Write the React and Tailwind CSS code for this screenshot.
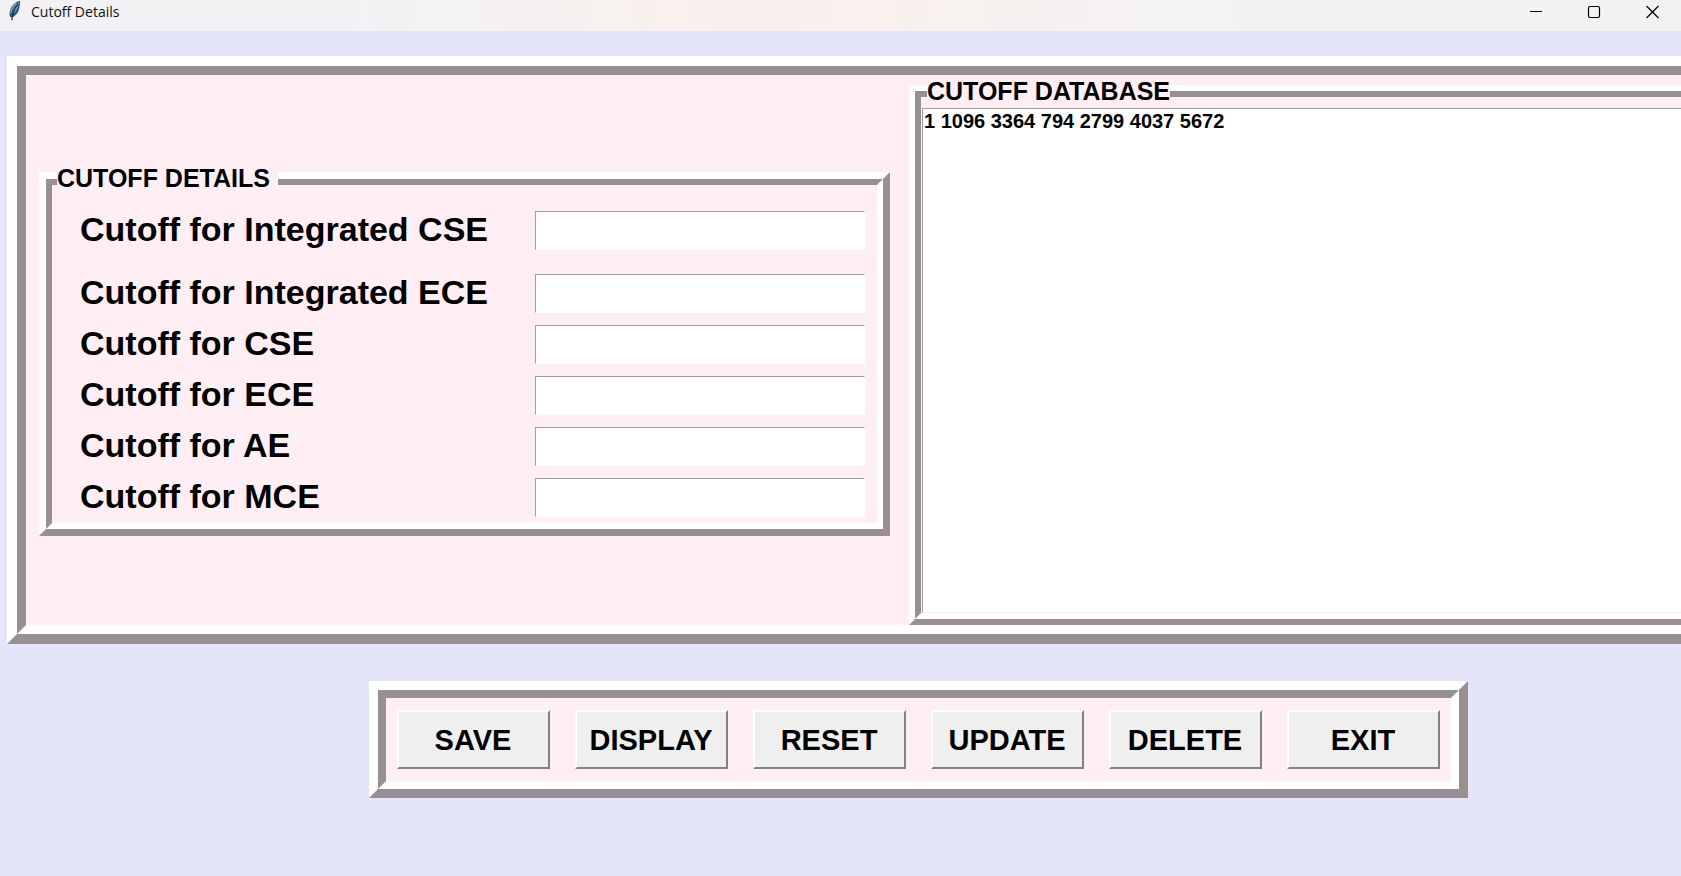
import React from "react";

const FIELDS = [
  { id: "int-cse", label: "Cutoff for Integrated CSE", row: "h-[75px]" },
  { id: "int-ece", label: "Cutoff for Integrated ECE", row: "h-[51px]" },
  { id: "cse", label: "Cutoff for CSE", row: "h-[51px]" },
  { id: "ece", label: "Cutoff for ECE", row: "h-[51px]" },
  { id: "ae", label: "Cutoff for AE", row: "h-[51px]" },
  { id: "mce", label: "Cutoff for MCE", row: "h-[51px]" },
];

const ACTIONS = ["SAVE", "DISPLAY", "RESET", "UPDATE", "DELETE", "EXIT"];

const RAISED = "border-t-white border-l-white border-r-[#988f92] border-b-[#988f92]";
const SUNKEN = "border-t-[#988f92] border-l-[#988f92] border-r-white border-b-white";

function Feather() {
  return (
    <svg width="14" height="21" viewBox="0 0 14 21" aria-hidden="true">
      <path d="M12 1C8.500 1.400 4.500 4.500 2.800 8.500C1.400 11.500 1 14.500 2.200 17L4 17.600C7 16 9.600 13.500 10.600 10.500C11.600 7.500 12.200 3.500 12 1Z" fill="#33506f" />
      <path d="M11 2C7.800 4.500 5.400 8.500 4.600 14.500C7.400 12.500 9.400 9.500 10.200 6.500Z" fill="#5c94d0" />
      <path d="M8.500 3.300C5.300 5.800 3.300 9.300 2.700 13.500" stroke="#8fb0cf" strokeWidth="1.200" fill="none" />
      <path d="M9.800 4C6.800 8 4.500 12.500 3.900 20.300" stroke="#1e2c3c" strokeWidth="1.100" fill="none" />
    </svg>
  );
}

function TitleBar() {
  return (
    <header className="flex h-[31px] items-start justify-between bg-linear-to-r from-[#f2f2f4] from-20% via-[#f9f0ec] via-45% to-[#f3f2f3] to-75%">
      <div className="flex items-start pl-2">
        <Feather />
        <h1 className="pl-[9px] font-['Open_Sans','Noto_Sans',sans-serif] text-[14px] leading-6 text-[#111]">
          Cutoff Details
        </h1>
      </div>
      <div className="flex h-6">
        <button type="button" aria-label="Minimize" className="flex w-[58px] items-center justify-center">
          <svg width="14" height="14" viewBox="0 0 14 14"><path d="M1 6.500H13" stroke="#000" /></svg>
        </button>
        <button type="button" aria-label="Maximize" className="flex w-[58px] items-center justify-center">
          <svg width="14" height="14" viewBox="0 0 14 14"><rect x="1.500" y="1.500" width="11" height="11" rx="1.500" fill="none" stroke="#000" strokeWidth="1.200" /></svg>
        </button>
        <button type="button" aria-label="Close" className="flex w-[58px] items-center justify-center">
          <svg width="14" height="14" viewBox="0 0 14 14"><path d="M1.500 1L13.500 13M13.500 1L1.500 13" stroke="#000" strokeWidth="1.200" /></svg>
        </button>
      </div>
    </header>
  );
}

export default function App() {
  return (
    <div className="min-h-screen overflow-hidden bg-[#e5e5fa] font-['Liberation_Sans',Arial,sans-serif] font-bold text-black">
      <div className="font-normal">
        <TitleBar />
      </div>

      {/* The form is laid out wider than the window and runs past its right edge. */}
      <main className="ml-[7px] w-[calc(100%+141px)] pt-[25px]">
        <div className={`border-[10px] ${RAISED}`}>
          <div className={`flex items-center border-[9px] bg-[#ffeff4] ${SUNKEN}`}>
            <section aria-labelledby="details-title" className="relative mt-2 mr-3 ml-[13px] shrink-0">
              <div className={`border-[7px] ${RAISED}`}>
                <form className={`border-[6px] pt-2 pr-3 pl-7 ${SUNKEN}`}>
                  {FIELDS.map((f) => (
                    <div key={f.id} className={`flex items-center ${f.row}`}>
                      <label htmlFor={f.id} className="w-[455px] pb-1 text-[34px] leading-10">
                        {f.label}
                      </label>
                      <input
                        id={f.id}
                        type="text"
                        className="h-[39px] w-[330px] border border-t-[#a39d9f] border-r-white border-b-white border-l-[#a39d9f] bg-white px-1 text-[28px] outline-none"
                      />
                    </div>
                  ))}
                </form>
              </div>
              <h2 id="details-title" className="absolute -top-2 left-[18px] bg-[#ffeff4] pr-2 text-[25px] leading-7">
                CUTOFF DETAILS
              </h2>
            </section>

            <section aria-labelledby="database-title" className="relative mt-[10px] ml-[7px] flex-1">
              <div className={`border-[6px] ${RAISED}`}>
                <div className={`border-[6px] pt-[11px] pl-px ${SUNKEN}`}>
                  <ul className="h-[505px] border border-t-[#a39d9f] border-r-[#f0f0f0] border-b-[#f0f0f0] border-l-[#a39d9f] bg-white pl-px text-[20px] leading-6">
                    <li>1 1096 3364 794 2799 4037 5672</li>
                  </ul>
                </div>
              </div>
              <h2 id="database-title" className="absolute -top-2 left-[18px] bg-[#ffeff4] text-[25px] leading-7">
                CUTOFF DATABASE
              </h2>
            </section>
          </div>
        </div>

        <div className={`mx-auto mt-[37px] w-fit border-[9px] ${RAISED}`}>
          <div className={`flex gap-[25px] border-[8px] bg-[#ffeff4] px-[11px] py-3 ${SUNKEN}`}>
            {ACTIONS.map((a) => (
              <button
                key={a}
                type="button"
                className="h-[59px] w-[153px] border-2 border-t-white border-r-[#858183] border-b-[#858183] border-l-white bg-[#efefef] text-[29px] leading-8"
              >
                {a}
              </button>
            ))}
          </div>
        </div>
      </main>
    </div>
  );
}
